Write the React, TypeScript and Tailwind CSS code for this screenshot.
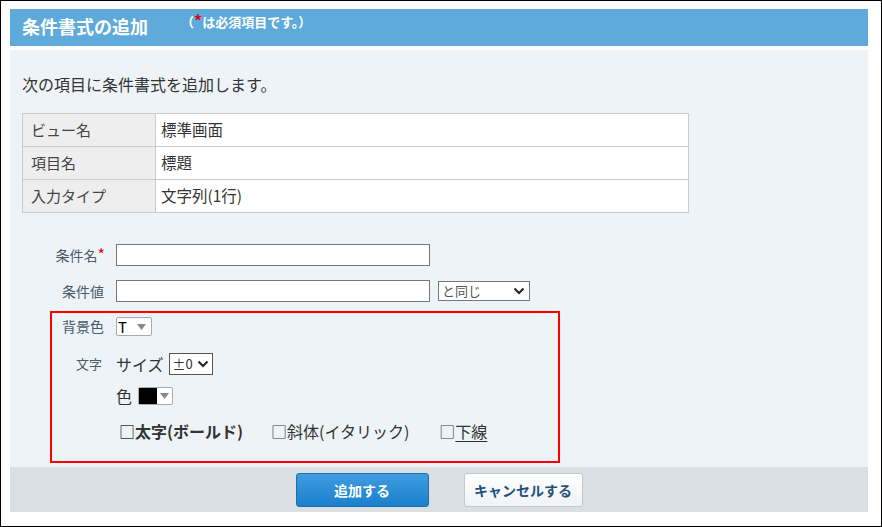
import React from "react";

const FONT = {
  fontFamily: '"Noto Sans CJK JP", "Noto Sans", "Liberation Sans", sans-serif',
};

const infoRows = [
  { label: "ビュー名", value: "標準画面" },
  { label: "項目名", value: "標題" },
  { label: "入力タイプ", value: "文字列(1行)" },
];

function Chevron() {
  return (
    <svg width="12" height="8" viewBox="0 0 12 8" className="shrink-0">
      <path d="M1.5 1.5 L6 6 L10.5 1.5" fill="none" stroke="#222" strokeWidth="2" />
    </svg>
  );
}

function DownTri() {
  return (
    <svg width="9" height="6" viewBox="0 0 9 6" className="shrink-0">
      <path d="M0 0 H9 L4.5 6 Z" fill="#888" />
    </svg>
  );
}

export default function App() {
  return (
    <div
      style={FONT}
      className="flex h-[527px] w-[882px] flex-col border border-black bg-white pb-[14px] pl-[9px] pr-[13px] pt-[8px] text-[#333]"
    >
      {/* title bar */}
      <div className="flex h-[37px] items-start bg-[#5eabdb] pl-[12px] text-white">
        <span className="mt-[5px] text-[18px] font-bold leading-[24px]">条件書式の追加</span>
        <span className="ml-[33px] mt-[4px] text-[13px] font-bold leading-[18px]">
          （<span className="text-[16px] leading-[0] text-[#e60012]">*</span>は必須項目です。）
        </span>
      </div>

      {/* body */}
      <div className="mt-[4px] flex flex-1 flex-col bg-[#eef3f7] px-[12px]">
        <p className="mt-[24px] text-[16px] leading-[20px]">次の項目に条件書式を追加します。</p>

        <table className="mt-[19px] w-[667px] border-collapse text-[15px]">
          <tbody>
            {infoRows.map((r) => (
              <tr key={r.label} className="h-[33px]">
                <td className="w-[133px] border border-[#cccccc] bg-[#eeeeee] pl-[8px] text-[#444]">
                  {r.label}
                </td>
                <td className="border border-[#cccccc] bg-white pl-[5px] text-[15.5px]">{r.value}</td>
              </tr>
            ))}
          </tbody>
        </table>

        {/* form */}
        <div className="mt-[31px] flex h-[22px] items-center">
          <span className="w-[83px] text-right text-[14px] leading-[22px] text-[#4b5b6c]">
            条件名<span className="text-[16px] leading-[0] text-[#e60012]">*</span>
          </span>
          <div className="ml-[11px] h-[22px] w-[314px] border border-[#777] bg-white" />
        </div>
        <div className="mt-[14px] flex h-[22px] items-center">
          <span className="w-[82px] text-right text-[14px] leading-[22px] text-[#4b5b6c]">条件値</span>
          <div className="ml-[12px] h-[22px] w-[314px] border border-[#777] bg-white" />
          <div className="ml-[8px] flex h-[20px] w-[92px] items-center justify-between border border-[#777] bg-white pl-[3px] pr-[4px]">
            <span className="text-[13px] leading-[18px] text-[#555]">と同じ</span>
            <Chevron />
          </div>
        </div>

        {/* highlighted box */}
        <div className="ml-[28px] mt-[9px] flex h-[152px] w-[510px] flex-col border-2 border-[#ff0000] pt-[4px]">
          <div className="flex items-center">
            <span className="w-[52px] text-right text-[14px] leading-[19px] text-[#4b5b6c]">背景色</span>
            <div className="ml-[12px] flex h-[19px] w-[36px] items-center justify-between rounded-[2px] border border-[#aaa] bg-white pr-[5px]">
              <span className="pl-[1px] text-[15px] leading-[17px] text-black">T</span>
              <DownTri />
            </div>
          </div>

          <div className="mt-[17px] flex items-center">
            <span className="w-[50px] text-right text-[13px] leading-[22px] text-[#4b5b6c]">文字</span>
            <span className="ml-[14px] text-[16px] leading-[22px]">サイズ</span>
            <div className="ml-[5px] flex h-[22px] w-[44px] items-center justify-between border border-[#555] bg-white pl-[3px] pr-[3px]">
              <span className="text-[13px] leading-[18px]">±0</span>
              <Chevron />
            </div>
          </div>

          <div className="mt-[11px] flex items-center pl-[64px]">
            <span className="text-[16px] leading-[20px]">色</span>
            <div className="ml-[6px] flex h-[18px] w-[35px] items-center rounded-[2px] border border-[#aaa] bg-white">
              <div className="h-full w-[18px] bg-black" />
              <div className="flex flex-1 items-center justify-center">
                <DownTri />
              </div>
            </div>
          </div>

          <div className="mt-[14px] flex items-center pl-[67px] text-[16px] leading-[22px]">
            <span className="font-bold">□太字(ボールド)</span>
            <span className="ml-[28px]">□斜体(イタリック)</span>
            <span className="ml-[30px]">
              □<span className="underline underline-offset-[3px]">下線</span>
            </span>
          </div>
        </div>
      </div>

      {/* footer buttons */}
      <div className="flex h-[45px] items-start justify-center gap-[35px] bg-[#dadfe3] pt-[6px]">
        <button className="h-[34px] w-[133px] rounded-[3px] border border-[#1f6ea6] bg-gradient-to-b from-[#3d9de0] to-[#1a80cc] text-[14px] font-bold text-white">
          追加する
        </button>
        <button className="h-[34px] w-[119px] rounded-[3px] border border-[#c3c8cc] bg-gradient-to-b from-white to-[#f0f2f4] text-[14px] font-bold text-[#1f4f7c]">
          キャンセルする
        </button>
      </div>
    </div>
  );
}
